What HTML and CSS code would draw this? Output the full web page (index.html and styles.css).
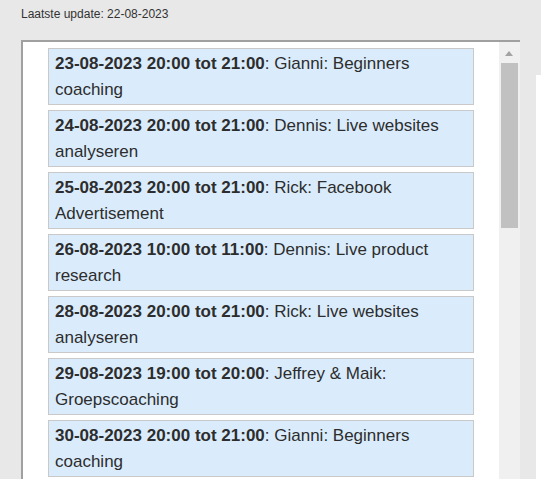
FILE: index.html
```html
<!DOCTYPE html>
<html lang="nl">
<head>
<meta charset="utf-8">
<title>Agenda</title>
<link rel="stylesheet" href="styles.css">
</head>
<body>
<div class="page">
  <main class="main">
    <p class="updated">Laatste update: 22-08-2023</p>
    <div class="box">
      <div class="list">
        <div class="item"><b>23-08-2023 20:00 tot 21:00</b>: Gianni: Beginners coaching</div>
        <div class="item"><b>24-08-2023 20:00 tot 21:00</b>: Dennis: Live websites analyseren</div>
        <div class="item"><b>25-08-2023 20:00 tot 21:00</b>: Rick: Facebook Advertisement</div>
        <div class="item"><b>26-08-2023 10:00 tot 11:00</b>: Dennis: Live product research</div>
        <div class="item"><b>28-08-2023 20:00 tot 21:00</b>: Rick: Live websites analyseren</div>
        <div class="item"><b>29-08-2023 19:00 tot 20:00</b>: Jeffrey &amp; Maik: Groepscoaching</div>
        <div class="item"><b>30-08-2023 20:00 tot 21:00</b>: Gianni: Beginners coaching</div>
      </div>
      <div class="scrollbar">
        <div class="arrow"></div>
        <div class="thumb"></div>
      </div>
    </div>
  </main>
  <aside class="side"></aside>
</div>
</body>
</html>
```

FILE: styles.css
```css
html, body {
  margin: 0;
  padding: 0;
  height: 100%;
  overflow: hidden;
}
body {
  background: #e8e8e8;
  font-family: "Liberation Sans", Arial, sans-serif;
  color: #2d2d2d;
}
.page {
  display: flex;
  height: 100%;
}
.main {
  width: 499px;
  padding-left: 21px;
  flex: none;
}
.updated {
  margin: 6px 0 0 0;
  font-size: 12px;
  line-height: 16px;
  color: #333;
}
.box {
  margin-top: 18px;
  display: flex;
  background: #fff;
  border-top: 2px solid #a0a0a0;
  border-left: 2px solid #a0a0a0;
  height: 437px;
}
.list {
  width: 426px;
  padding: 6px 25px 0 25px;
  flex: none;
}
.item {
  background: #daecfc;
  border: 1px solid #c9c9c9;
  padding: 2px 6px;
  margin-bottom: 5px;
  font-size: 17px;
  line-height: 25.5px;
  color: #2d2d2d;
}
.item b {
  font-weight: bold;
}
.scrollbar {
  width: 21px;
  background: #f0f0f0;
  flex: none;
  display: flex;
  flex-direction: column;
}
.arrow {
  width: 0;
  height: 0;
  margin: 9px 0 0 6px;
  border-left: 4.5px solid transparent;
  border-right: 4.5px solid transparent;
  border-bottom: 5px solid #a3a3a3;
}
.thumb {
  margin: 7px 0 0 2px;
  width: 17px;
  height: 165px;
  background: #c1c1c1;
}
.side {
  flex: 1;
  margin: 75px 0 0 16px;
  background: #fff;
}
```
